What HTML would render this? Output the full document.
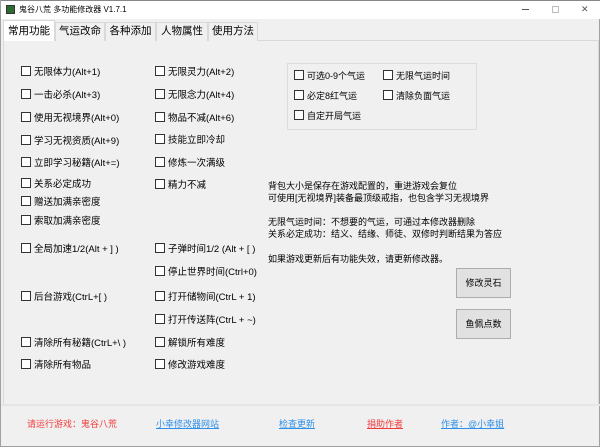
<!DOCTYPE html><html><head><meta charset="utf-8"><style>
*{margin:0;padding:0;box-sizing:border-box}
body{width:600px;height:447px;background:#f0f0f0;font-family:"Liberation Sans","Noto Sans CJK SC",sans-serif;font-size:9.5px;color:#000;position:relative;overflow:hidden;border-left:1px solid #a0a0a0;border-right:1px solid #a0a0a0;border-bottom:1px solid #a0a0a0}
.a{position:absolute;white-space:nowrap}
.t{position:absolute;top:0;left:0;width:600px;height:19px;background:#fff;border-top:1px solid #888}
.tab{position:absolute;top:22px;height:19px;border:1px solid #d9d9d9;border-bottom:none;background:#f0f0f0;font-size:10.5px;line-height:17px;text-align:center}
.cb{position:absolute;white-space:nowrap;line-height:13px}
.cb:before{content:"";display:inline-block;width:8px;height:8px;border:1px solid #333;background:#fff;margin-right:3px;vertical-align:-1px}
.btn{position:absolute;width:55px;height:30px;background:#e1e1e1;border:1px solid #adadad;text-align:center;line-height:28px;font-size:9px}
.f{position:absolute;top:417px;text-decoration:underline;font-size:9px}
</style></head><body>
<div class="t"></div>
<div class="a" style="left:5px;top:5px;width:9px;height:9px;background:#2e6b2e;border:1px solid #333"></div>
<div class="a" style="left:18px;top:4px;font-size:8px">鬼谷八荒 多功能修改器 V1.7.1</div>
<div class="a" style="left:521px;top:9px;width:7px;height:1px;background:#555"></div>
<div class="a" style="left:551px;top:6px;width:7px;height:7px;border:1px solid #bbb"></div>
<div class="a" style="left:580px;top:4px;font-size:9px;color:#555">✕</div>
<div class="a" style="left:2px;top:40px;width:596px;height:365px;border:1px solid #d9d9d9;background:#f0f0f0"></div>
<div class="tab" style="left:54px;width:50px">气运改命</div>
<div class="tab" style="left:104px;width:51px">各种添加</div>
<div class="tab" style="left:155px;width:52px">人物属性</div>
<div class="tab" style="left:207px;width:50px">使用方法</div>
<div class="tab" style="left:2px;top:20px;height:21px;width:52px;background:#fff;line-height:20px">常用功能</div>
<div class="cb" style="left:20px;top:66px">无限体力(Alt+1)</div>
<div class="cb" style="left:20px;top:89px">一击必杀(Alt+3)</div>
<div class="cb" style="left:20px;top:112px">使用无视境界(Alt+0)</div>
<div class="cb" style="left:20px;top:135px">学习无视资质(Alt+9)</div>
<div class="cb" style="left:20px;top:157px">立即学习秘籍(Alt+=)</div>
<div class="cb" style="left:20px;top:178px">关系必定成功</div>
<div class="cb" style="left:20px;top:196px">赠送加满亲密度</div>
<div class="cb" style="left:20px;top:215px">索取加满亲密度</div>
<div class="cb" style="left:20px;top:243px">全局加速1/2(Alt + ] )</div>
<div class="cb" style="left:20px;top:291px">后台游戏(CtrL+[ )</div>
<div class="cb" style="left:20px;top:337px">清除所有秘籍(CtrL+\ )</div>
<div class="cb" style="left:20px;top:359px">清除所有物品</div>
<div class="cb" style="left:154px;top:66px">无限灵力(Alt+2)</div>
<div class="cb" style="left:154px;top:89px">无限念力(Alt+4)</div>
<div class="cb" style="left:154px;top:112px">物品不减(Alt+6)</div>
<div class="cb" style="left:154px;top:134px">技能立即冷却</div>
<div class="cb" style="left:154px;top:157px">修炼一次满级</div>
<div class="cb" style="left:154px;top:179px">精力不减</div>
<div class="cb" style="left:154px;top:243px">子弹时间1/2 (Alt + [ )</div>
<div class="cb" style="left:154px;top:266px">停止世界时间(Ctrl+0)</div>
<div class="cb" style="left:154px;top:291px">打开储物间(CtrL + 1)</div>
<div class="cb" style="left:154px;top:314px">打开传送阵(CtrL + ~)</div>
<div class="cb" style="left:154px;top:337px">解锁所有难度</div>
<div class="cb" style="left:154px;top:359px">修改游戏难度</div>
<div class="a" style="left:286px;top:63px;width:190px;height:67px;border:1px solid #dcdcdc"></div>
<div class="cb" style="left:293px;top:70px;font-size:9px">可选0-9个气运</div>
<div class="cb" style="left:382px;top:70px;font-size:9px">无限气运时间</div>
<div class="cb" style="left:293px;top:90px;font-size:9px">必定8红气运</div>
<div class="cb" style="left:382px;top:90px;font-size:9px">清除负面气运</div>
<div class="cb" style="left:293px;top:110px;font-size:9px">自定开局气运</div>
<div class="a" style="left:267px;top:180px;line-height:12px;font-size:9px">背包大小是保存在游戏配置的，重进游戏会复位<br>可使用[无视境界]装备最顶级戒指，也包含学习无视境界</div>
<div class="a" style="left:267px;top:216px;line-height:12px;font-size:9px">无限气运时间：不想要的气运，可通过本修改器删除<br>关系必定成功：结义、结缘、师徒、双修时判断结果为答应</div>
<div class="a" style="left:267px;top:252px;font-size:9px">如果游戏更新后有功能失效，请更新修改器。</div>
<div class="btn" style="left:455px;top:268px">修改灵石</div>
<div class="btn" style="left:455px;top:309px">鱼佩点数</div>
<div class="a" style="left:0;top:404px;width:600px;height:2px;background:#e6e6e6"></div>
<div class="a" style="left:26px;top:417px;color:#f03c3c;font-size:9px">请运行游戏：鬼谷八荒</div>
<div class="f" style="left:155px;color:#2f8fe8">小幸修改器网站</div>
<div class="f" style="left:278px;color:#2f8fe8">检查更新</div>
<div class="f" style="left:366px;color:#f03c3c">捐助作者</div>
<div class="f" style="left:440px;color:#2f8fe8">作者：@小幸姐</div>
</body></html>
